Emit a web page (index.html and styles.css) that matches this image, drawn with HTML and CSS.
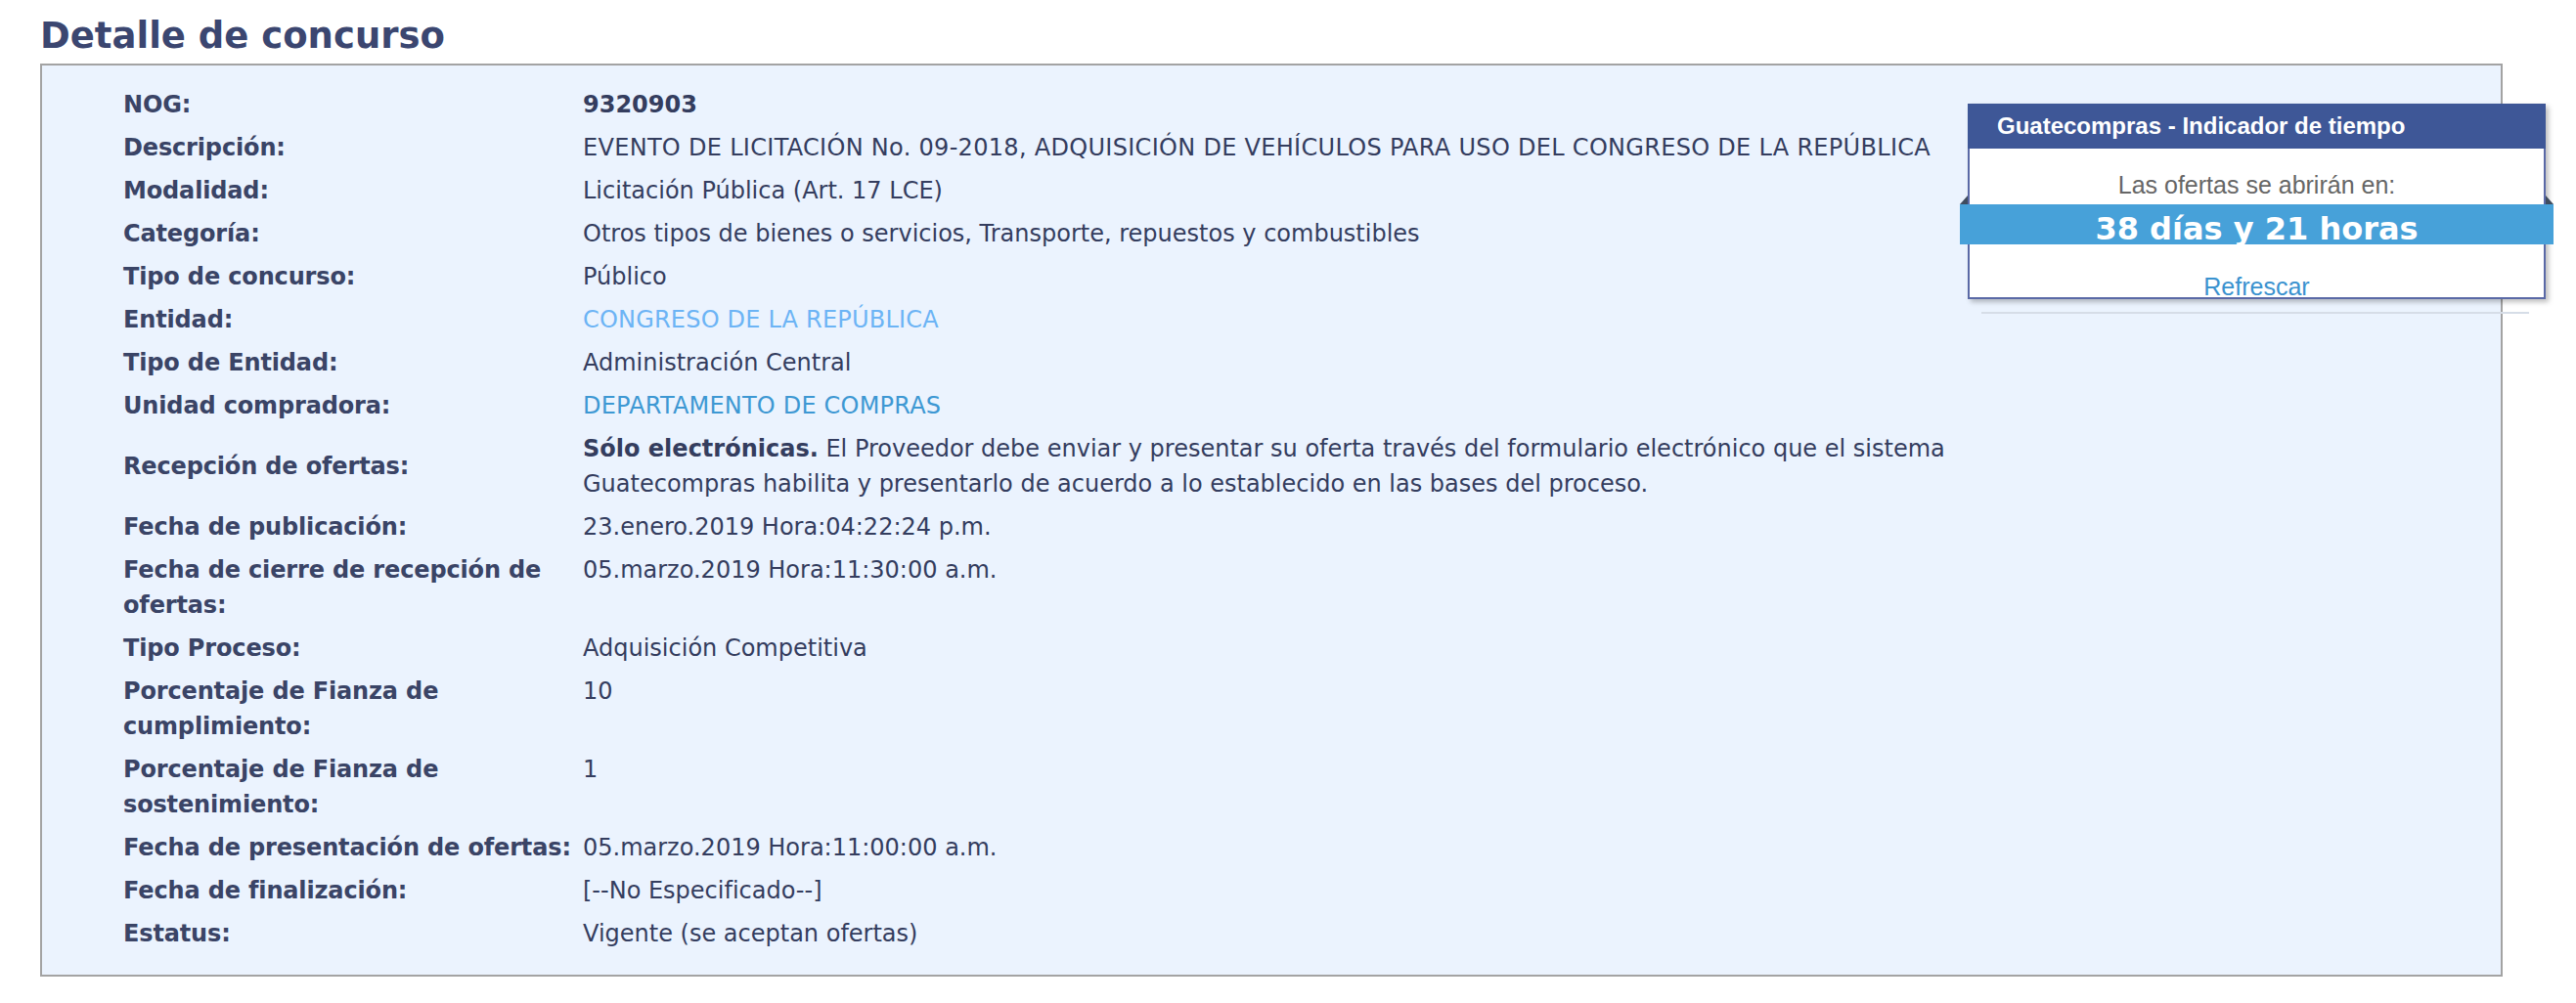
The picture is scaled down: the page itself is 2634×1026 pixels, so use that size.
FILE: index.html
```html
<!DOCTYPE html>
<html lang="es">

<head>
  <meta charset="UTF-8">
  <meta name="viewport" content="width=device-width, initial-scale=1.0">
  <title>Detalle de concurso</title>
  <link rel="stylesheet" href="styles.css">
</head>

<body>
  <div class="page">
    <h1 class="titulo">Detalle de concurso</h1>

    <div class="detalle">
      <table class="tabla_detalle">
        <tr>
          <td class="lbl">NOG:</td>
          <td class="val"><b>9320903</b></td>
        </tr>
        <tr>
          <td class="lbl">Descripción:</td>
          <td class="val mayus">EVENTO DE LICITACIÓN No. 09-2018, ADQUISICIÓN DE VEHÍCULOS PARA USO DEL CONGRESO DE LA REPÚBLICA</td>
        </tr>
        <tr>
          <td class="lbl">Modalidad:</td>
          <td class="val">Licitación Pública (Art. 17 LCE)</td>
        </tr>
        <tr>
          <td class="lbl">Categoría:</td>
          <td class="val">Otros tipos de bienes o servicios, Transporte, repuestos y combustibles</td>
        </tr>
        <tr>
          <td class="lbl">Tipo de concurso:</td>
          <td class="val">Público</td>
        </tr>
        <tr>
          <td class="lbl">Entidad:</td>
          <td class="val"><a class="link_entidad" href="#">CONGRESO DE LA REPÚBLICA</a></td>
        </tr>
        <tr>
          <td class="lbl">Tipo de Entidad:</td>
          <td class="val">Administración Central</td>
        </tr>
        <tr>
          <td class="lbl">Unidad compradora:</td>
          <td class="val"><a class="link_unidad" href="#">DEPARTAMENTO DE COMPRAS</a></td>
        </tr>
        <tr>
          <td class="lbl">Recepción de ofertas:</td>
          <td class="val"><b>Sólo electrónicas.</b> El Proveedor debe enviar y presentar su oferta través del formulario electrónico que el sistema Guatecompras habilita y presentarlo de acuerdo a lo establecido en las bases del proceso.</td>
        </tr>
        <tr>
          <td class="lbl">Fecha de publicación:</td>
          <td class="val">23.enero.2019 Hora:04:22:24 p.m.</td>
        </tr>
        <tr>
          <td class="lbl">Fecha de cierre de recepción de ofertas:</td>
          <td class="val">05.marzo.2019 Hora:11:30:00 a.m.</td>
        </tr>
        <tr>
          <td class="lbl">Tipo Proceso:</td>
          <td class="val">Adquisición Competitiva</td>
        </tr>
        <tr>
          <td class="lbl">Porcentaje de Fianza de cumplimiento:</td>
          <td class="val">10</td>
        </tr>
        <tr>
          <td class="lbl">Porcentaje de Fianza de sostenimiento:</td>
          <td class="val">1</td>
        </tr>
        <tr>
          <td class="lbl">Fecha de presentación de ofertas:</td>
          <td class="val">05.marzo.2019 Hora:11:00:00 a.m.</td>
        </tr>
        <tr>
          <td class="lbl">Fecha de finalización:</td>
          <td class="val">[--No Especificado--]</td>
        </tr>
        <tr>
          <td class="lbl">Estatus:</td>
          <td class="val">Vigente (se aceptan ofertas)</td>
        </tr>
      </table>

      <div class="indicador_wrap">
        <div class="indicador">
          <div class="indicador_head">Guatecompras - Indicador de tiempo</div>
          <div class="indicador_body">
            <p class="indicador_txt">Las ofertas se abrirán en:</p>
            <div class="indicador_cinta">38 días y 21 horas</div>
            <a class="indicador_link" href="#">Refrescar</a>
          </div>
        </div>
        <div class="indicador_linea"></div>
      </div>
    </div>
  </div>
</body>

</html>
```

FILE: styles.css
```css
* {
  margin: 0;
  padding: 0;
  box-sizing: border-box;
}

body {
  background: #fff;
  font-family: "DejaVu Sans", Verdana, sans-serif;
  color: #343d5e;
}

.page {
  padding: 15px 0 0 41px;
}

.titulo {
  font-size: 37px;
  line-height: 44px;
  font-weight: bold;
  color: #3b4670;
  margin-bottom: 6px;
}

.detalle {
  display: flex;
  align-items: flex-start;
  width: 2518px;
  border: 2px solid #a3a3a3;
  background: #ebf3fe;
  padding: 18px 0 20px 83px;
}

/* tabla de datos */
.tabla_detalle {
  flex: none;
  width: 1874px;
  border-collapse: collapse;
  font-size: 24px;
  line-height: 36px;
}

.tabla_detalle td {
  padding: 4px 0;
}

.tabla_detalle .lbl {
  width: 470px;
  font-weight: bold;
  color: #3a4466;
  letter-spacing: -0.15px;
  vertical-align: middle;
}

.tabla_detalle .val {
  vertical-align: top;
}

.tabla_detalle .mayus {
  letter-spacing: 0.3px;
}

.link_entidad {
  color: #6cb4f5;
  text-decoration: none;
  letter-spacing: 0.2px;
}

.link_unidad {
  color: #3d98d3;
  text-decoration: none;
  letter-spacing: 0.2px;
}

/* indicador de tiempo */
.indicador_wrap {
  flex: none;
  width: 591px;
  margin: 21px 0 0 12px;
}

.indicador {
  box-shadow: 3px 3px 5px rgba(0, 0, 0, 0.25);
  font-family: "Liberation Sans", Arial, sans-serif;
}

.indicador_head {
  height: 46px;
  line-height: 46px;
  padding-left: 30px;
  background: #3e5797;
  color: #fff;
  font-size: 24px;
  font-weight: bold;
}

.indicador_body {
  height: 154px;
  background: #fff;
  border: 2px solid #5a69a6;
  border-top: none;
  text-align: center;
}

.indicador_txt {
  padding-top: 22px;
  font-size: 25px;
  line-height: 30px;
  color: #666;
}

.indicador_cinta {
  position: relative;
  height: 41px;
  margin: 5px -10px 0;
  background: #47a1d9;
  color: #fff;
  font-family: "DejaVu Sans", Verdana, sans-serif;
  font-size: 32px;
  font-weight: bold;
  line-height: 50px;
}

.indicador_cinta::before,
.indicador_cinta::after {
  content: "";
  position: absolute;
  top: -9px;
  width: 0;
  height: 0;
  border-bottom: 9px solid #3f4c5e;
}

.indicador_cinta::before {
  left: 0;
  border-left: 8px solid transparent;
}

.indicador_cinta::after {
  right: 0;
  border-right: 8px solid transparent;
}

.indicador_link {
  display: block;
  margin-top: 30px;
  font-size: 25px;
  line-height: 26px;
  color: #3a92cf;
  text-decoration: none;
}

.indicador_linea {
  width: 560px;
  height: 2px;
  margin: 13px 0 0 14px;
  background: #d6dde7;
}
```
